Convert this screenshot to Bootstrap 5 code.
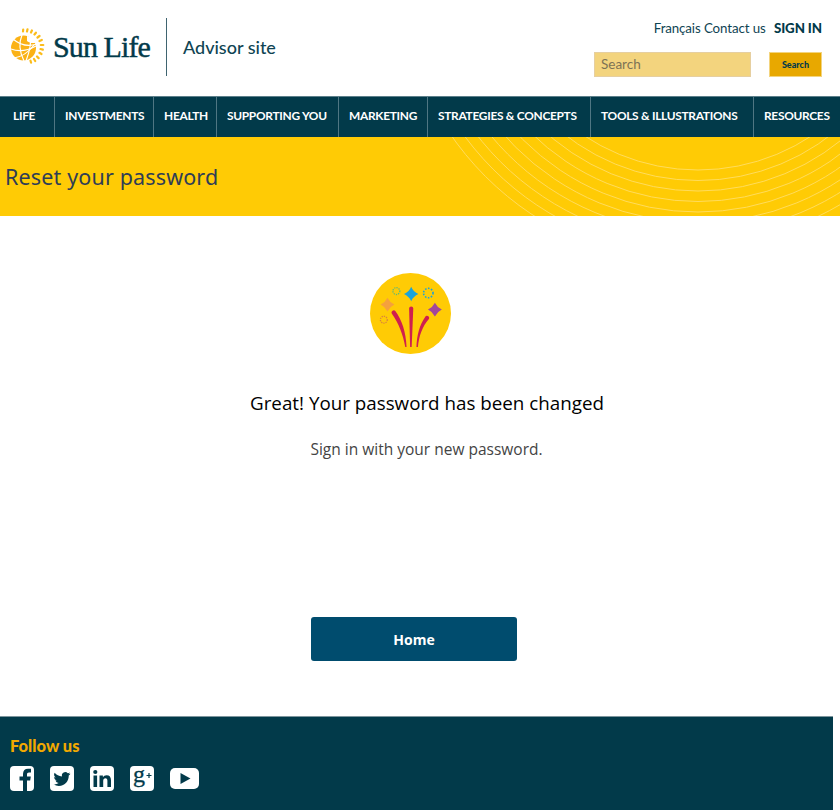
<!DOCTYPE html>
<html lang="en">
<head>
  <meta charset="UTF-8" />
  <title>Reset your password | Sun Life Advisor site</title>
  <link href="https://cdn.jsdelivr.net/npm/bootstrap@5.3.0/dist/css/bootstrap.min.css" rel="stylesheet" />
  <style>
    html, body { height: 810px; overflow: hidden; }
    body { font-family: Lato, "Liberation Sans", sans-serif; color: #023a4a; background: #fff; }
    .site-head { height: 96px; }
    .logo-wrap { padding: 0 0 2px 8px; }
    .brand-name { font-family: "Liberation Serif", serif; font-size: 30px; letter-spacing: -.9px; color: #023a4a; -webkit-text-stroke: .45px #023a4a; line-height: 1; margin-left: 7px; }
    .brand-rule { width: 1px; height: 58px; background: #3f6470; margin: 0 16px 0 16px; }
    .brand-sub { font-family: Lato, sans-serif; font-size: 18px; font-weight: 500; color: #0f4453; }
    .head-right { width: 228px; margin-right: 18px; padding-top: 20px; }
    .top-links { font-size: 13.3px; line-height: 16px; letter-spacing: -.1px; white-space: nowrap; }
    .top-links a { color: #0f4453; text-decoration: none; }
    .top-links .sign-in { font-weight: 900; color: #023a4a; margin-left: 5px; }
    .search-row { margin-top: 16px; }
    .search-box { width: 157px; height: 25px; background: #f3d47e; border: 1px solid #e6cfa0; border-radius: 0; font-size: 13.5px; padding: 0 6px 2px; color: #7d7355; }
    .search-box::placeholder { color: #7d7355; opacity: 1; }
    .search-go { width: 53px; height: 25px; background: #e8a800; border: 1px solid #f3d47e; border-radius: 0; font-size: 9px; font-weight: 900; padding: 0; color: #023a4a; }
    .main-nav { display: grid; grid-template-columns: 55px 99px 63px 122px 89px 163px 163px 84px; height: 41px; background: #023a4a; border-top: 1px solid #5c7f8a; }
    .main-nav a { display: flex; align-items: center; padding: 0 0 2px 10px; color: #fff; text-decoration: none; font-size: 11.9px; font-weight: 700; letter-spacing: -.28px; white-space: nowrap; border-right: 1px solid #4f7683; }
    .main-nav a:first-child { padding-left: 13px; }
    .main-nav a:last-child { border-right: 0; }
    .title-band { height: 79px; background: #ffcb05; overflow: hidden; }
    .band-arcs { position: absolute; top: 0; left: 0; }
    .title-band h1 { font-family: "Noto Sans", sans-serif; font-size: 21.5px; font-weight: 400; color: #2f3d55; margin: 0; padding-left: 5px; line-height: 79px; letter-spacing: .15px; }
    .burst { display: block; margin: 57px 0 0 370px; }
    .done-title { font-family: "Open Sans", sans-serif; font-size: 18.8px; font-weight: 400; color: #000; margin: 36px 0 0; padding-left: 14px; line-height: 26px; }
    .done-note { font-family: "Open Sans", sans-serif; font-size: 15.5px; color: #444; margin: 21px 0 0; padding-left: 13px; line-height: 24px; }
    .home-btn { display: block; width: 206px; height: 44px; margin: 156px 0 0 311px; background: #004c6e; border: 0; border-radius: 3px; color: #fff; font-family: "Open Sans", sans-serif; font-size: 14px; font-weight: 700; line-height: 45px; padding: 0; }
    .home-btn:hover { background: #004c6e; color: #fff; }
    .site-foot { width: 833px; height: 94px; margin-top: 55px; background: #023a4a; border-top: 1px solid #7d959d; padding: 20px 0 0 10px; }
    .follow { font-size: 16.5px; font-weight: 900; color: #f2a900; line-height: 18px; }
    .socials { margin-top: 11px; gap: 16px; }
    .socials svg { overflow: visible; }
  </style>
</head>
<body>
  <header class="site-head d-flex justify-content-between">
    <div class="logo-wrap d-flex align-items-center">
      <a href="#" class="d-flex align-items-center text-decoration-none">
        <svg width="38" height="38" viewBox="0 0 38 38" aria-hidden="true">
          <g stroke="#fbbc1a" stroke-width="2.200" stroke-linecap="round">
            <path d="M15 3.500l.2-2M19 3.500l.5-2.200M23 4.500l.9-2M26.500 6.500l1.400-1.800M29.500 9.500l2-1.500M31.500 13l2.300-1M32.800 17h2.500M32.500 21l2.300.6M31.500 24.800l2 1.200M29 28.500l1.600 1.600M26 31l1.200 2M22.500 32.700l.6 2"/>
          </g>
          <circle cx="15.500" cy="20" r="12.500" fill="#fbb216"/>
          <g fill="none" stroke="#fff" stroke-width="1.200">
            <path d="M5 11c7 6 15 8 24 5"/>
            <path d="M3 21c8 3 16 2 25-3"/>
            <path d="M6 30c7-1 14-5 20-13"/>
            <path d="M14 7c-3 7-3 16 2 26"/>
            <path d="M22 8c2 8-1 17-4 25"/>
          </g>
          <path d="M19 8c4 .2 7.500 2 9 6.500-3 1-6 .8-9-1.500z" fill="#fff"/>
        </svg>
        <span class="brand-name">Sun Life</span>
      </a>
      <span class="brand-rule"></span>
      <span class="brand-sub">Advisor site</span>
    </div>
    <div class="head-right">
      <div class="top-links text-end">
        <a href="#">Français</a> <a href="#">Contact us</a> <a href="#" class="sign-in">SIGN IN</a>
      </div>
      <form class="search-row d-flex justify-content-between">
        <input class="search-box" type="text" placeholder="Search" />
        <button class="search-go" type="button">Search</button>
      </form>
    </div>
  </header>

  <nav class="main-nav">
    <a href="#">LIFE</a>
    <a href="#">INVESTMENTS</a>
    <a href="#">HEALTH</a>
    <a href="#">SUPPORTING YOU</a>
    <a href="#">MARKETING</a>
    <a href="#">STRATEGIES &amp; CONCEPTS</a>
    <a href="#">TOOLS &amp; ILLUSTRATIONS</a>
    <a href="#">RESOURCES</a>
  </nav>

  <section class="title-band position-relative">
    <svg class="band-arcs" width="840" height="79" viewBox="0 0 840 79" aria-hidden="true">
      <g fill="none" stroke="#ffdc5c" stroke-width="1" id="arcs"></g>
    </svg>
    <h1 class="position-relative">Reset your password</h1>
  </section>

  <main>
    <svg class="burst" width="81" height="81" viewBox="0 0 82 82" aria-hidden="true">
      <circle cx="41" cy="41" r="41" fill="#ffcb05"/>
      <path d="M41.700 14Q44 19.500 49 21.300Q44 23.500 41.700 28.600Q39.400 23.500 34.400 21.300Q39.400 19.500 41.700 14z" fill="#1aa3dc"/>
      <path d="M17.700 25Q20 29.700 24.700 32Q20 34.300 17.700 39Q15.400 34.300 10.700 32Q15.400 29.700 17.700 25z" fill="#f5a13c"/>
      <path d="M65.700 30Q68 34.700 72.700 37Q68 39.300 65.700 44Q63.400 39.300 58.700 37Q63.400 34.700 65.700 30z" fill="#a2469c"/>
      <circle cx="26.700" cy="18.300" r="3.500" fill="none" stroke="#5fb87a" stroke-width="1.300" stroke-dasharray="1.300 1"/>
      <circle cx="59" cy="20.300" r="4.800" fill="none" stroke="#1aa3dc" stroke-width="1.600" stroke-dasharray="1.600 1.500"/>
      <circle cx="14" cy="47.300" r="3.500" fill="none" stroke="#d9823f" stroke-width="1.300" stroke-dasharray="1.300 1"/>
      <g fill="#cf1f4f">
        <path d="M39.600 36a2.100 2.100 0 0 1 4.200 0L42.200 75h-1.600z"/>
        <path d="M22 41a2.200 2.200 0 0 1 3.800-2.200C32 47 36.500 60 37 75h-1.300C33.500 62 29 51 22 41z"/>
        <path d="M55.800 44.500a2.200 2.200 0 0 1 4 1.800C53 54 49.500 64 48.500 75H47C47.500 63 50 53 55.800 44.500z"/>
      </g>
    </svg>
    <h2 class="done-title text-center">Great! Your password has been changed</h2>
    <p class="done-note text-center">Sign in with your new password.</p>
    <a href="#" class="btn home-btn">Home</a>
  </main>

  <footer class="site-foot">
    <div class="follow">Follow us</div>
    <div class="socials d-flex align-items-center">
      <svg width="24" height="25" viewBox="0 0 24 25" aria-label="Facebook">
        <rect width="24" height="25" rx="4" fill="#fff"/>
        <path d="M13 25V14.500H9.500v-4H13V8c0-3.400 2-5.200 5-5.200h3v3.700h-2c-1.500 0-2 .7-2 2v2h3.800l-.6 4H17V25z" fill="#023a4a"/>
      </svg>
      <svg width="24" height="25" viewBox="0 0 24 25" aria-label="Twitter">
        <rect width="24" height="25" rx="4" fill="#fff"/>
        <g transform="translate(3.500 4) scale(1.060)">
          <path d="M5.026 15c6.038 0 9.341-5.003 9.341-9.334 0-.14 0-.282-.006-.422A6.685 6.685 0 0 0 16 3.542a6.658 6.658 0 0 1-1.889.518 3.301 3.301 0 0 0 1.447-1.817 6.533 6.533 0 0 1-2.087.793A3.286 3.286 0 0 0 7.875 6.030a9.325 9.325 0 0 1-6.767-3.429 3.289 3.289 0 0 0 1.018 4.382A3.323 3.323 0 0 1 .64 6.575v.045a3.288 3.288 0 0 0 2.632 3.218 3.203 3.203 0 0 1-.865.115 3.230 3.230 0 0 1-.614-.057 3.283 3.283 0 0 0 3.067 2.277A6.588 6.588 0 0 1 .78 13.580a6.320 6.320 0 0 1-.78-.045A9.344 9.344 0 0 0 5.026 15z" fill="#023a4a"/>
        </g>
      </svg>
      <svg width="24" height="25" viewBox="0 0 24 25" aria-label="LinkedIn">
        <rect width="24" height="25" rx="4" fill="#fff"/>
        <g fill="#023a4a">
          <rect x="3.500" y="9.500" width="3.600" height="11.500"/>
          <circle cx="5.300" cy="6" r="2.100"/>
          <path d="M9.500 9.500h3.400v1.700c.7-1.200 2-2 3.700-2 3 0 4.400 1.900 4.400 5V21h-3.600v-6.200c0-1.700-.6-2.600-1.900-2.600-1.400 0-2.300 1-2.300 2.700V21H9.500z"/>
        </g>
      </svg>
      <svg width="24" height="25" viewBox="0 0 24 25" aria-label="Google Plus">
        <rect width="24" height="25" rx="4" fill="#fff"/>
        <text x="3" y="15.500" font-family="Liberation Serif, serif" font-size="24" fill="#023a4a" stroke="#023a4a" stroke-width=".3">g</text>
        <path d="M16.500 9.500h5M19 7v5" stroke="#023a4a" stroke-width="1.200"/>
      </svg>
      <svg width="29" height="21" viewBox="0 0 29 21" aria-label="YouTube">
        <rect width="29" height="21" rx="5" fill="#fff"/>
        <path d="M10.500 5l10 5.500-10 5.500z" fill="#023a4a"/>
      </svg>
    </div>
  </footer>

  <script>
    // concentric lines behind the page title
    const arcs = document.getElementById('arcs');
    for (let i = 0; i < 10; i++) {
      const c = document.createElementNS('http://www.w3.org/2000/svg', 'circle');
      c.setAttribute('cx', 698);
      c.setAttribute('cy', -173);
      c.setAttribute('r', 206 + i * 10.5);
      arcs.appendChild(c);
    }
  </script>
  <script src="https://cdn.jsdelivr.net/npm/bootstrap@5.3.0/dist/js/bootstrap.bundle.min.js"></script>
</body>
</html>
